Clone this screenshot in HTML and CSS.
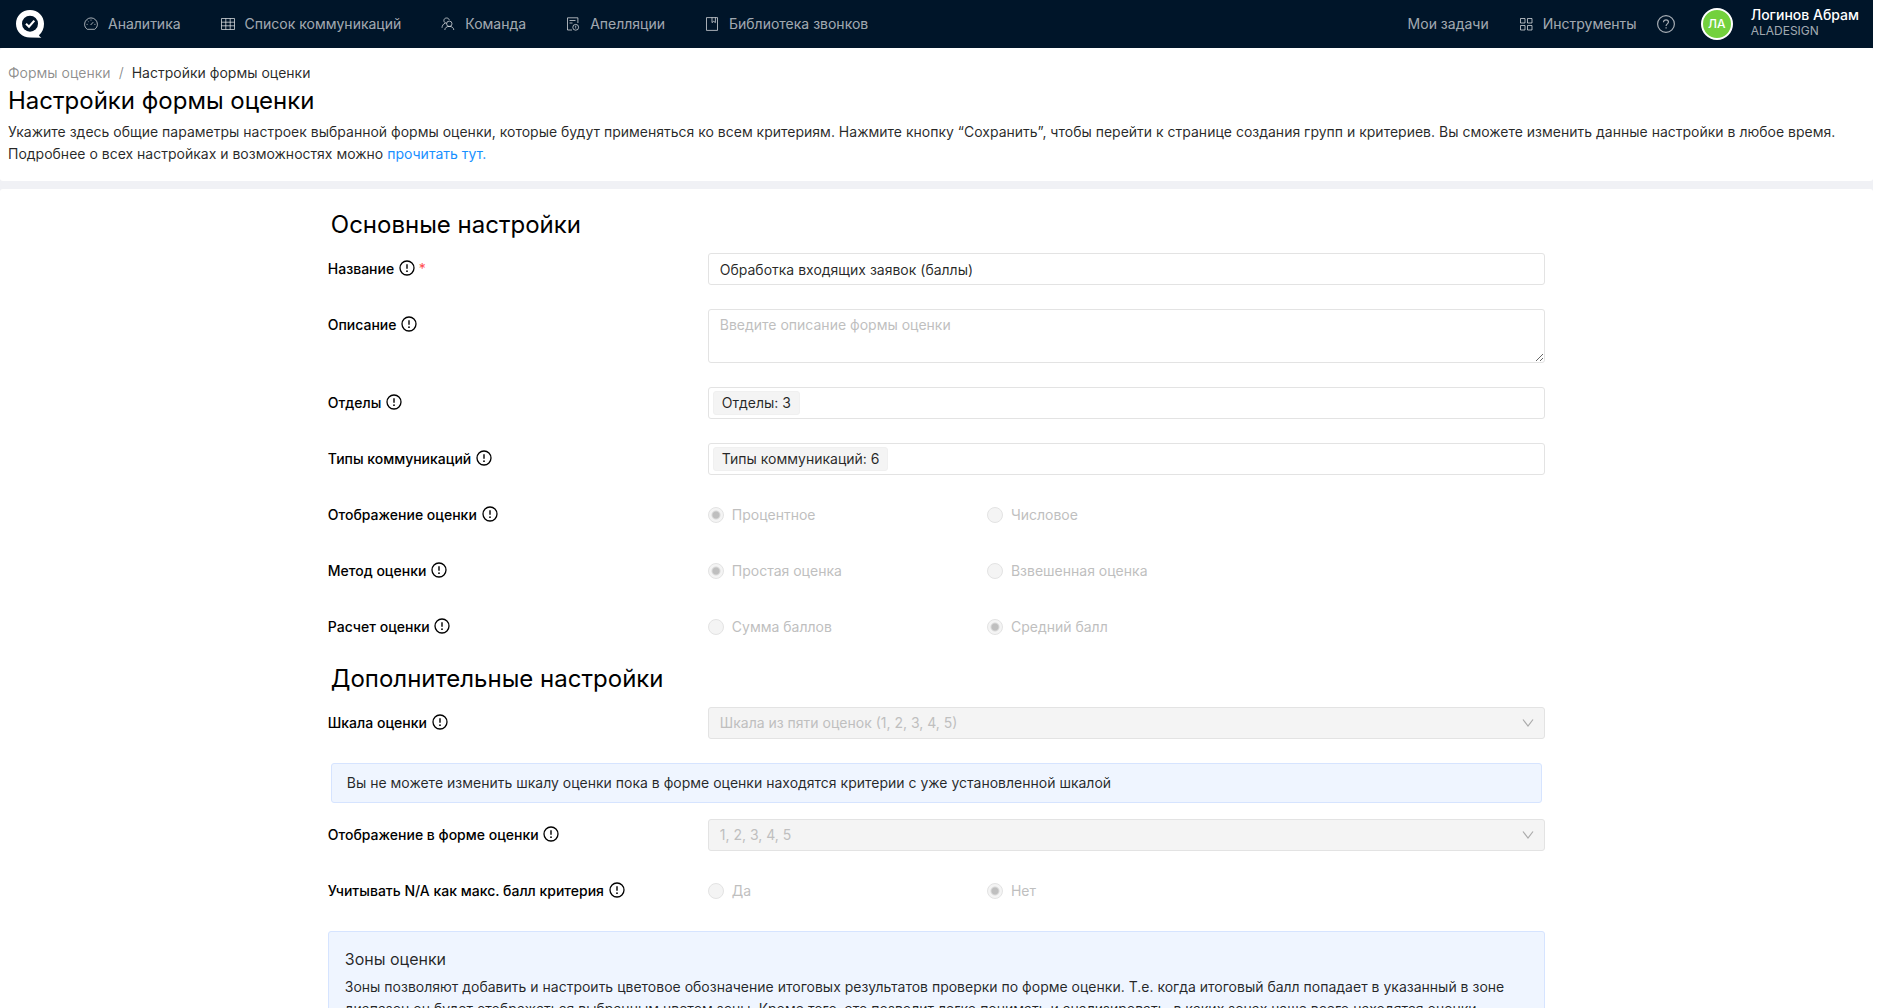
FILE: index.html
```html
<!DOCTYPE html>
<html lang="ru">
<head>
<meta charset="utf-8">
<title>Настройки формы оценки</title>
<link rel="stylesheet" href="styles.css">
</head>
<body>
<svg class="sprite" aria-hidden="true">
  <symbol id="info" viewBox="0 0 16 16"><circle cx="8" cy="8" r="7" fill="none" stroke="currentColor" stroke-width="1.3"/><path d="M8 4.2v4.600" stroke="currentColor" stroke-width="1.4"/><circle cx="8" cy="11.2" r=".9" fill="currentColor"/></symbol>
  <symbol id="down" viewBox="0 0 12 12"><path d="M1 2.5 6 9l5-6.500" fill="none" stroke="currentColor" stroke-width="1.2"/></symbol>
</svg>
<header class="topbar">
  <a class="logo" href="#" aria-label="Главная">
    <svg viewBox="0 0 28 28" width="28" height="28"><path d="M14 0C6 0 0 6 0 13.700S6 27.500 14 27.500l11.500.3c-1.100-.5-2-1.400-2.600-2.600 3.300-2.700 5.100-6.500 5.100-11.500C28 6 22 0 14 0Z" fill="#fff"/><circle cx="14" cy="13.700" r="8" fill="#001529"/><path d="m10 13.800 3 3 5.300-6.200" fill="none" stroke="#fff" stroke-width="2.100"/></svg>
  </a>
  <nav class="menu">
    <a href="#"><svg viewBox="0 0 14 14"><path d="M3.300 12.300C1.500 11 .6 9.300.6 7.300a6.400 6.400 0 0 1 12.800 0c0 2-.9 3.700-2.700 5z"/><path d="m6.600 8 2.600-2.800M7 2.600v1M3.800 4l.7.7M2.600 7.400h1M10.400 7.400h1"/></svg>Аналитика</a>
    <a href="#"><svg viewBox="0 0 14 14"><path d="M.5 1.500h13v11H.5zM.5 5.200h13M.5 8.800h13M4.800 1.500v11M9.200 1.500v11"/></svg>Список коммуникаций</a>
    <a href="#"><svg viewBox="0 0 14 14"><circle cx="8.300" cy="6.800" r="2.700"/><path d="M3.800 13c.2-2.300 1.900-3.600 4.500-3.600s4.300 1.300 4.500 3.600M5.700 6.200C4 6 2.900 5 2.900 3.600 2.900 2 4 1 5.600 1 7 1 7.900 1.700 8.200 3M1 10.800c.1-2.200 1.200-3.800 3.300-4.700"/></svg>Команда</a>
    <a href="#"><svg viewBox="0 0 14 14"><path d="M6 13H1.500V.8h10.400V6M3.500 3.500h6M3.500 6h3"/><circle cx="9.700" cy="10.300" r="2.900"/><path d="M9.700 8.700v2.100M9.700 11.500v.5"/></svg>Апелляции</a>
    <a href="#"><svg viewBox="0 0 14 14"><path d="M1.500.6h11v12.800h-11zM7 .6v5l1.700-1.300 1.700 1.300v-5"/></svg>Библиотека звонков</a>
  </nav>
  <nav class="tools">
    <a href="#">Мои задачи</a>
    <a href="#"><svg viewBox="0 0 14 14"><path d="M1.500 1.500H6V6H1.500zM8.500 1.500H13V6H8.500zM1.500 8.500H6V13H1.500zM8.500 8.500H13V13H8.500z"/></svg>Инструменты</a>
  </nav>
  <button class="help" type="button" aria-label="Справка"><svg viewBox="0 0 18 18"><circle cx="9" cy="9" r="8.400"/><path d="M6.500 7.200C6.500 5.700 7.600 4.800 9 4.800s2.500.9 2.500 2.300c0 1.700-2.400 1.900-2.400 3.800M9.100 12.300v1.100"/></svg></button>
  <a class="user" href="#"><span class="avatar">ЛА</span><span class="who"><b>Логинов Абрам</b><small>ALADESIGN</small></span></a>
</header>
<main>
  <section class="panel intro">
    <nav class="crumbs"><a href="#">Формы оценки</a><span>/</span><span class="current">Настройки формы оценки</span></nav>
    <h1>Настройки формы оценки</h1>
    <p>Укажите здесь общие параметры настроек выбранной формы оценки, которые будут применяться ко всем критериям. Нажмите кнопку “Сохранить”, чтобы перейти к странице создания групп и критериев. Вы сможете изменить данные настройки в любое время.<br>Подробнее о всех настройках и возможностях можно <a href="#">прочитать тут.</a></p>
  </section>
  <section class="panel">
    <form class="form">
      <h2>Основные настройки</h2>
      <div class="row"><label class="name" for="title">Название <svg><use href="#info"/></svg> <i>*</i></label><input class="field" id="title" type="text" value="Обработка входящих заявок (баллы)"></div>
      <div class="row"><label class="name" for="about">Описание <svg><use href="#info"/></svg></label><textarea class="field" id="about" placeholder="Введите описание формы оценки"></textarea></div>
      <div class="row"><span class="name">Отделы <svg><use href="#info"/></svg></span><button class="field tags" type="button"><span>Отделы: 3</span></button></div>
      <div class="row"><span class="name">Типы коммуникаций <svg><use href="#info"/></svg></span><button class="field tags" type="button"><span>Типы коммуникаций: 6</span></button></div>
      <div class="row" role="radiogroup" aria-labelledby="l1"><span class="name" id="l1">Отображение оценки <svg><use href="#info"/></svg></span><div class="options"><label><input type="radio" name="view" checked disabled>Процентное</label><label><input type="radio" name="view" disabled>Числовое</label></div></div>
      <div class="row" role="radiogroup" aria-labelledby="l2"><span class="name" id="l2">Метод оценки <svg><use href="#info"/></svg></span><div class="options"><label><input type="radio" name="method" checked disabled>Простая оценка</label><label><input type="radio" name="method" disabled>Взвешенная оценка</label></div></div>
      <div class="row" role="radiogroup" aria-labelledby="l3"><span class="name" id="l3">Расчет оценки <svg><use href="#info"/></svg></span><div class="options"><label><input type="radio" name="calc" disabled>Сумма баллов</label><label><input type="radio" name="calc" checked disabled>Средний балл</label></div></div>
      <h2>Дополнительные настройки</h2>
      <div class="row"><label class="name" for="scale">Шкала оценки <svg><use href="#info"/></svg></label><div class="select"><select class="field" id="scale" disabled><option>Шкала из пяти оценок (1, 2, 3, 4, 5)</option></select><svg><use href="#down"/></svg></div></div>
      <p class="note">Вы не можете изменить шкалу оценки пока в форме оценки находятся критерии с уже установленной шкалой</p>
      <div class="row"><label class="name" for="shown">Отображение в форме оценки <svg><use href="#info"/></svg></label><div class="select"><select class="field" id="shown" disabled><option>1, 2, 3, 4, 5</option></select><svg><use href="#down"/></svg></div></div>
      <div class="row" role="radiogroup" aria-labelledby="l4"><span class="name" id="l4">Учитывать N/A как макс. балл критерия <svg><use href="#info"/></svg></span><div class="options"><label><input type="radio" name="na" disabled>Да</label><label><input type="radio" name="na" checked disabled>Нет</label></div></div>
      <section class="zones">
        <h3>Зоны оценки</h3>
        <p>Зоны позволяют добавить и настроить цветовое обозначение итоговых результатов проверки по форме оценки. Т.е. когда итоговый балл попадает в указанный в зоне диапазон он будет отображаться выбранным цветом зоны. Кроме того, это позволит легко понимать и анализировать, в каких зонах чаще всего находятся оценки.</p>
      </section>
    </form>
  </section>
</main>
</body>
</html>
```
FILE: styles.css
```css
* { box-sizing: border-box; }
html { scrollbar-width: none; }
body {
  margin: 0;
  padding-right: 4px;
  background: #fff;
  color: rgba(0, 0, 0, .85);
  font: 400 14px/22px Inter, "Noto Sans", sans-serif;
  font-optical-sizing: none;
}
a { color: #1890ff; text-decoration: none; }
h1, h2, h3, p { margin: 0; }
.sprite { display: none; }

.topbar {
  display: flex;
  align-items: center;
  height: 48px;
  padding: 0 14px 0 16px;
  background: #001529;
}
.topbar nav a {
  display: flex;
  align-items: center;
  gap: 10px;
  color: rgba(255, 255, 255, .65);
}
.topbar nav svg { width: 14px; height: 14px; }
.topbar nav svg, .help svg { fill: none; stroke: currentColor; stroke-width: 1; }
.logo { display: flex; margin-right: 40px; }
.menu { display: flex; gap: 40px; margin-right: auto; }
.tools { display: flex; gap: 30px; }
.help {
  display: flex;
  margin: 0 26px 0 20px;
  padding: 0;
  border: 0;
  background: none;
  color: rgba(255, 255, 255, .65);
}
.help svg { width: 18px; height: 18px; stroke-width: 1.2; }
.user { display: flex; align-items: center; gap: 18px; color: #fff; }
.avatar {
  width: 32px;
  height: 32px;
  border: 2px solid #fff;
  border-radius: 50%;
  background: #73d13d;
  font-size: 12px;
  font-weight: 500;
  line-height: 28px;
  text-align: center;
}
.who { display: grid; padding-bottom: 2px; }
.who b { font-weight: 500; line-height: 16px; }
.who small { color: rgba(255, 255, 255, .65); font-size: 12px; line-height: 16px; }

main { display: grid; gap: 8px; background: #f0f1f5; }
.panel { border-radius: 3px; background: #fff; }
.intro { padding: 14px 8px 16px; }
.crumbs { display: flex; gap: 8px; color: rgba(0, 0, 0, .45); }
.crumbs a { color: inherit; }
.crumbs .current { color: rgba(0, 0, 0, .85); }
h1, h2 { color: #000; font-size: 24px; font-weight: 400; line-height: 32px; }
h1 { line-height: 34px; }
.intro p { padding-top: 3px; }

.form { width: 65%; margin: 0 auto; padding: 20px 0 24px; }
.form h2 { padding-left: 3px; }
.row + h2 { margin-top: -4px; }
.row {
  display: grid;
  grid-template-columns: 380px 1fr;
  margin-bottom: 24px;
  line-height: 32px;
}
h2 + .row { margin-top: 12px; }
.name { color: #000; font-weight: 500; }
.name svg { width: 16px; height: 16px; margin-left: 1px; vertical-align: -2px; }
.name i { color: #ff4d4f; font-style: normal; font-weight: 400; }
.field {
  display: block;
  width: 100%;
  height: 32px;
  padding: 4px 11px;
  border: 1px solid #e3e3e3;
  border-radius: 3px;
  background: #fff;
  color: inherit;
  font: inherit;
  line-height: 22px;
  text-align: left;
}
textarea.field { height: 54px; }
.field::placeholder { color: #bfbfbf; opacity: 1; }
.tags { padding: 3px 4px; }
.tags span {
  display: inline-block;
  height: 24px;
  padding: 0 8px;
  border: 1px solid #f0f0f0;
  border-radius: 3px;
  background: #f4f4f4;
}
.select { display: grid; align-items: center; }
.select > * { grid-area: 1 / 1; }
.select svg { width: 12px; height: 12px; margin-right: 11px; justify-self: end; color: #aaa; }
select.field { appearance: none; background: #f4f4f4; color: #bfbfbf; opacity: 1; }
.options { display: grid; grid-template-columns: 1fr 1fr 1fr; color: #bfbfbf; }
.options label { display: flex; align-items: center; gap: 8px; }
.options input {
  appearance: none;
  width: 16px;
  height: 16px;
  margin: 0;
  border: 1px solid #e3e3e3;
  border-radius: 50%;
  background: #f4f4f4;
}
.options input:checked { background: radial-gradient(circle, #bfbfbf 3px, #f4f4f4 5px); }
.note {
  margin: 0 3px 16px;
  padding: 8px 15px;
  border: 1px solid #d6e4ff;
  border-radius: 3px;
  background: #eff5ff;
}
.zones {
  padding: 15px 16px 24px;
  border: 1px solid #d6e4ff;
  border-radius: 3px;
  background: #eff5ff;
}
.zones h3 { margin-bottom: 5px; font-size: 16px; font-weight: 400; line-height: 24px; }
```
